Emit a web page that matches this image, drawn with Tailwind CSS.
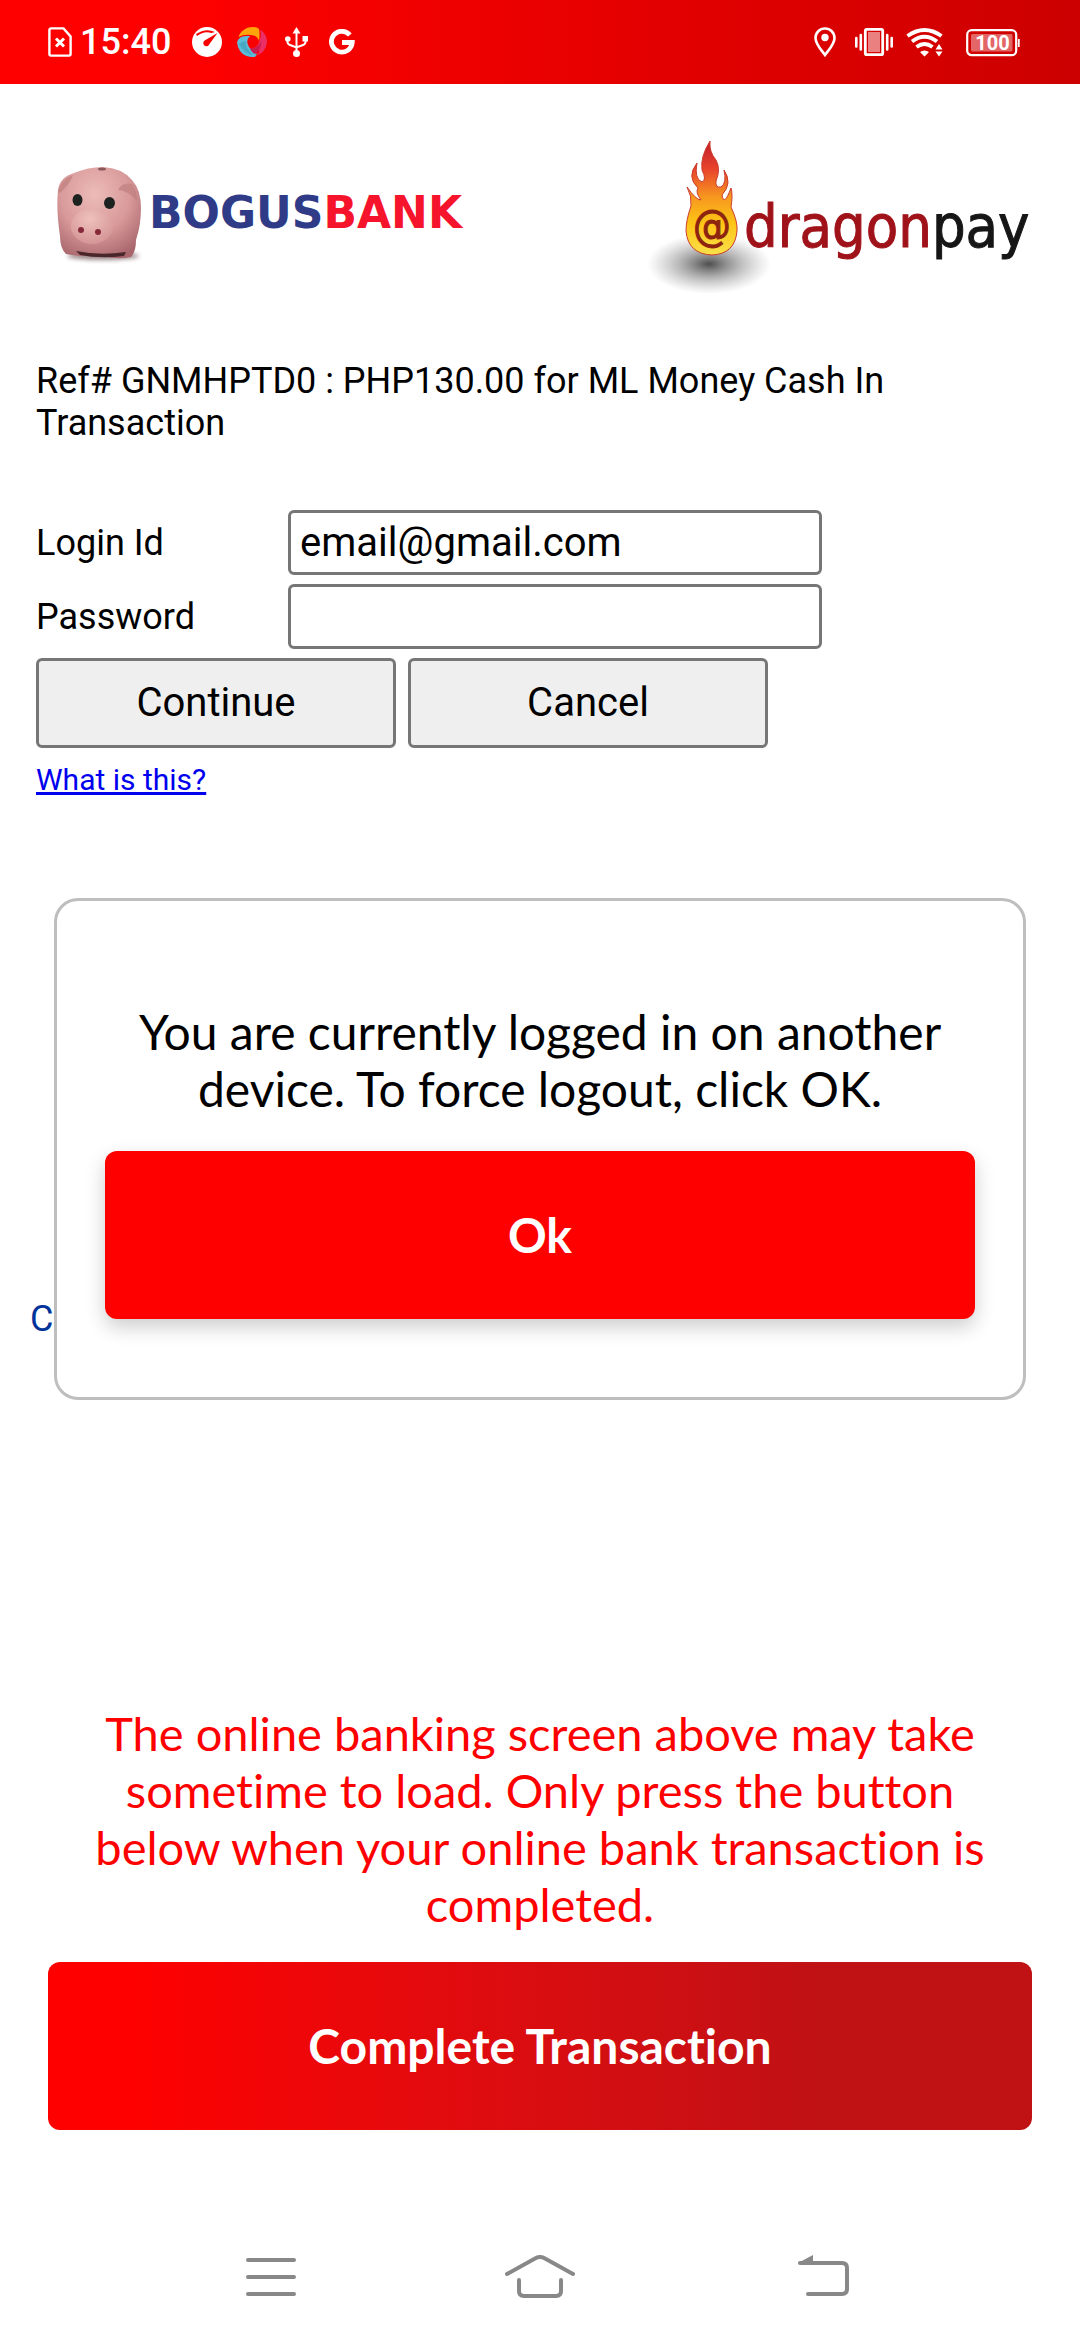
<!DOCTYPE html>
<html lang="en">
<head>
<meta charset="utf-8">
<meta name="viewport" content="width=device-width, initial-scale=1">
<title>Online banking</title>
<script src="https://cdn.jsdelivr.net/npm/@tailwindcss/browser@4"></script>
</head>
<body class="bg-white text-black font-['Roboto',sans-serif]">
<div class="relative flex min-h-screen flex-col">

  <!-- Status bar -->
  <header class="flex h-[84px] shrink-0 items-center justify-between bg-linear-to-r from-[#ff0000] from-15% to-[#cc0000] pl-12 pr-[60px] text-white">
    <div class="flex items-center">
      <svg class="h-[30px] w-6" viewBox="0 0 24 30" fill="none" stroke="#fff" stroke-width="2.4"><path d="M3 1.4H15.5L22.6 9.5V27a1.6 1.6 0 0 1-1.6 1.6H3A1.6 1.6 0 0 1 1.4 27V3A1.6 1.6 0 0 1 3 1.400Z"/><path d="M8 11.500L16 19.500M16 11.500L8 19.500" stroke-width="3"/></svg>
      <span class="ml-2 w-[100px] text-[36px] leading-[42px] font-medium">15:40</span>
      <svg class="ml-3 h-[30px] w-[30px]" viewBox="0 0 30 30"><circle cx="15" cy="15" r="15" fill="#fff"/><path d="M4 7Q14 .5 23 5L19.500 6Q12 3.500 5 9Z" fill="#f60000"/><path d="M25.500 6L17.500 17A3.200 3.200 0 1 1 13 13.200Z" fill="#f60000"/></svg>
      <svg class="ml-[15px] h-[30px] w-[30px]" viewBox="0 0 30 30"><path d="M1.500 10C4 3 10 0 16 0Q20 0 22 2Q23 7 22 14Q20 8 14 8Q7 7 1.500 10Z" fill="#fda50b"/><path d="M0 15Q2 9 9 9L13 9Q8 14 12 20Q15 25 20 27L18 30Q5 31 1 20Z" fill="#5bbdd8"/><path d="M23 2.500Q30 7 30 15Q29 26 18 29Q23 26 22 23Q17 26 13 21Q20 22 22 15Q25 9 23 2.500Z" fill="#ea2f67"/><path d="M2 17Q6 14 9 14Q8 21 16 28Q7 27 2 17Z" fill="#49a9c5"/><path d="M13 21Q21 22 24 14Q25 22 18 27Q14 25 13 21Z" fill="#ca1d50"/></svg>
      <svg class="ml-[18px] h-[30px] w-6" viewBox="0 0 24 30" fill="none" stroke="#fff" stroke-width="2"><path d="M11.500 4V26M2.500 12V15Q2.500 17 5 18L11.500 20.500L18 18Q20.500 17 20.500 15V12"/><path d="M11.500 0L15.500 6.500H7.500Z" fill="#fff" stroke="none"/><circle cx="2.800" cy="12" r="2.800" fill="#fff" stroke="none"/><path d="M17.500 9H23V14.500H17.500Z" fill="#fff" stroke="none"/><circle cx="11.500" cy="26.500" r="3.500" fill="#fff" stroke="none"/></svg>
      <svg class="ml-5 h-[26px] w-[26px]" viewBox="0 0 26 26" fill="none" stroke="#fff" stroke-width="4.800"><path d="M20.800 6A10.400 10.400 0 1 0 23.200 13.500H13"/></svg>
    </div>
    <div class="flex items-center">
      <svg class="h-[30px] w-[22px]" viewBox="0 0 22 30"><path d="M11 1.500A9.400 9.400 0 0 0 1.500 11C1.500 17.500 7.500 23 11 28C14.500 23 20.500 17.500 20.500 11A9.400 9.400 0 0 0 11 1.500Z" fill="none" stroke="#fff" stroke-width="2.600"/><circle cx="11" cy="10.500" r="3.700" fill="#fff"/></svg>
      <svg class="ml-[19px] h-[30px] w-[38px]" viewBox="0 0 38 30"><rect x="10.300" y="2.300" width="17.400" height="25.400" rx="1.500" fill="none" stroke="#fff" stroke-width="2.800"/><rect x="13" y="5" width="12" height="20" fill="#fff" fill-opacity=".5"/><path d="M1.300 11V19.500M5.800 8V22.500M32.200 8V22.500M36.700 11V19.500" stroke="#fff" stroke-width="2.600" stroke-linecap="round"/></svg>
      <svg class="ml-[13px] h-[30px] w-[38px]" viewBox="0 0 38 30"><g fill="none" stroke="#fff" stroke-width="3.800"><path d="M1.500 9Q18.500 -3 35.500 9"/><path d="M6 14.500Q18.500 5 31 14.500"/><path d="M10.500 20Q18.500 14 26.500 20"/></g><path d="M14 25Q18.500 22 23 25L18.500 29.500ZM29.500 22.500L33 17L36.500 22.500ZM29.500 24.500H36.500L33 29.500Z" fill="#fff"/></svg>
      <svg class="ml-[22px] h-[30px] w-[54px]" viewBox="0 0 54 30"><rect x="1.200" y="3.200" width="49" height="25" rx="4.500" fill="none" stroke="#fff" stroke-width="2.200"/><rect x="5" y="7" width="41.500" height="17.500" rx="1.500" fill="#fff" fill-opacity=".4"/><path d="M52.800 12V20" stroke="#fff" stroke-width="1.800"/><text x="26.500" y="22.500" text-anchor="middle" font-family="Roboto, sans-serif" font-size="20" font-weight="700" fill="#fff">100</text></svg>
    </div>
  </header>

  <main class="flex flex-1 flex-col">
    <!-- Bank and payment logos -->
    <div class="flex justify-between pt-[46px] pr-5 pl-9">
      <svg class="h-[170px] w-[440px]" viewBox="36 130 440 170" role="img" aria-label="Bogus Bank">
        <defs>
          <radialGradient id="pig" cx=".45" cy=".3" r=".75"><stop offset="0" stop-color="#ecbcb8"/><stop offset=".55" stop-color="#d99a9b"/><stop offset="1" stop-color="#a8666c"/></radialGradient>
          <radialGradient id="snout" cx=".45" cy=".3" r=".75"><stop offset="0" stop-color="#efc1bc"/><stop offset="1" stop-color="#d39294"/></radialGradient>
          <filter id="soft" x="-20%" y="-80%" width="140%" height="260%"><feGaussianBlur stdDeviation="2"/></filter>
        </defs>
        <ellipse cx="103" cy="256" rx="36" ry="4" fill="#5c3b3e" opacity=".6" filter="url(#soft)"/>
        <path d="M58 190Q60 177 74 173Q88 167 103 167Q122 168 132 180Q141 190 141 208Q141 225 136 240Q136 252 131 257Q118 260 103 256Q80 257 66 254Q60 248 60 236Q56 210 58 190Z" fill="url(#pig)"/>
        <path d="M58 192Q61 179 73 175Q70 184 60 193ZM118 190Q122 182 132 184Q138 194 137 201Q127 190 118 190Z" fill="#bd7e7c" opacity=".65"/>
        <ellipse cx="102" cy="169" rx="4" ry="1.500" fill="#8b575a"/>
        <path d="M76 251Q100 256 126 252L124 256Q100 259 80 255Z" fill="#48262a"/>
        <ellipse cx="92" cy="226" rx="21" ry="18" fill="url(#snout)"/>
        <ellipse cx="77.500" cy="200" rx="5" ry="6" fill="#1c2220"/><ellipse cx="109.500" cy="203" rx="5.500" ry="6" fill="#1c2220"/>
        <circle cx="81" cy="230" r="3" fill="#85293a"/><circle cx="98" cy="232" r="3" fill="#85293a"/>
        <text x="149" y="228" font-family="'DejaVu Sans', sans-serif" font-weight="700" font-size="44" fill="#2f3b87">BOGUS<tspan fill="#f5142b">BANK</tspan></text>
      </svg>
      <svg class="h-[170px] w-[420px]" viewBox="640 130 420 170" role="img" aria-label="Dragonpay">
        <defs>
          <linearGradient id="flame" x1="0" y1="0" x2="0" y2="1"><stop offset="0" stop-color="#c01c2c"/><stop offset=".25" stop-color="#e9452b"/><stop offset=".5" stop-color="#f79a1f"/><stop offset=".72" stop-color="#fdc414"/><stop offset="1" stop-color="#fbe04a"/></linearGradient>
          <radialGradient id="shade"><stop offset="0" stop-color="#444" stop-opacity=".95"/><stop offset=".5" stop-color="#777" stop-opacity=".5"/><stop offset="1" stop-color="#999" stop-opacity="0"/></radialGradient>
        </defs>
        <ellipse cx="709" cy="264" rx="62" ry="30" fill="url(#shade)"/>
        <path d="M710 141Q709 152 716 160Q721 169 716 181Q715 188 721 187Q727 183 724 170Q733 183 722 195Q724 207 731 188Q733 195 731 207Q738 222 737 231Q735 254 712 255Q688 254 686 231Q686 220 691 206Q692 196 687 187Q696 200 701 200Q695 192 698 188Q686 177 697 163Q694 179 702 182Q707 180 702 170Q700 157 710 141Z" fill="url(#flame)" stroke="#cb3c2c" stroke-width="1"/>
        <text x="712" y="241" text-anchor="middle" font-family="'DejaVu Sans Condensed', 'DejaVu Sans', sans-serif" font-stretch="condensed" font-size="42" stroke="#8d240f" stroke-width="1" fill="#8d240f">@</text>
        <text x="744" y="247" font-family="'DejaVu Sans Condensed', 'DejaVu Sans', sans-serif" font-stretch="condensed" font-size="59" fill="#a01219" stroke="#a01219" stroke-width="1">dragon<tspan fill="#161616" stroke="#161616">pay</tspan></text>
      </svg>
    </div>

    <p class="mt-[60px] px-9 text-[36px] leading-[42px]">Ref# GNMHPTD0 : PHP130.00 for ML Money Cash In Transaction</p>

    <form class="mt-[66px] flex flex-col gap-[9px] px-9">
      <div class="grid grid-cols-[252px_minmax(0,534px)] items-center gap-y-[9px] text-[36px] leading-[42px]">
        <label for="login">Login Id</label>
        <input id="login" type="text" value="email@gmail.com" class="h-[65px] w-full rounded-[6px] border-3 border-[#767676] bg-white px-[9px] text-[40px]">
        <label for="password">Password</label>
        <input id="password" type="password" class="h-[65px] w-full rounded-[6px] border-3 border-[#767676] bg-white px-[9px] text-[40px]">
      </div>
      <div class="flex gap-3">
        <button type="button" class="h-[90px] w-[360px] rounded-[6px] border-3 border-[#767676] bg-[#efefef] text-[40px]">Continue</button>
        <button type="button" class="h-[90px] w-[360px] rounded-[6px] border-3 border-[#767676] bg-[#efefef] text-[40px]">Cancel</button>
      </div>
    </form>
    <a href="#" class="mt-[14px] ml-9 self-start text-[30px] leading-9 text-[#0000ee] underline">What is this?</a>
    <p class="mt-[500px] px-[30px] text-[36px] leading-[42px] text-[#003399]">C</p>

    <section class="mt-auto px-12 pb-[92px] pt-8 text-center font-['Lato',sans-serif] [font-variant-ligatures:none]">
      <p class="px-9 text-[47px] leading-[57px] text-[#ff0000]">The online banking screen above may take sometime to load. Only press the button below when your online bank transaction is completed.</p>
      <button type="button" class="mt-[29px] h-[168px] w-full rounded-[12px] bg-linear-to-r from-[#ff0000] from-8% to-[#c01115] to-78% text-[48px] font-bold text-white [font-variant-ligatures:none]">Complete Transaction</button>
    </section>
  </main>

  <!-- Logged-in elsewhere dialog -->
  <div role="dialog" aria-labelledby="notice" class="absolute inset-x-[54px] top-[898px] rounded-[24px] border-3 border-[#bebebe] bg-white px-12 pt-[102px] pb-[78px] text-center font-['Lato',sans-serif] text-[48px]">
    <p id="notice" class="px-6 leading-[57px]">You are currently logged in on another device. To force logout, click OK.</p>
    <button type="button" class="mt-[34px] h-[168px] w-full rounded-[12px] bg-[#ff0000] font-bold text-white shadow-[0_8px_20px_rgba(0,0,0,0.2)]">Ok</button>
  </div>

  <!-- System navigation -->
  <nav class="grid h-[118px] shrink-0 grid-cols-[1fr_auto_1fr] items-center px-[246px] pb-2 text-[#888]">
    <button type="button" aria-label="Recent apps" class="justify-self-start"><svg class="h-[44px] w-[50px]" viewBox="0 0 50 44" fill="none" stroke="currentColor" stroke-width="4" stroke-linecap="round"><path d="M2 5H48M2 22H48M2 39H48"/></svg></button>
    <button type="button" aria-label="Home"><svg class="h-[44px] w-[70px]" viewBox="0 0 70 44" fill="none" stroke="currentColor" stroke-width="4" stroke-linecap="round"><path d="M2 19L30 3.500Q35 .5 40 3.500L68 19M14 25V36Q14 41 19 41H51Q56 41 56 36V25"/></svg></button>
    <button type="button" aria-label="Back" class="-mr-4 justify-self-end"><svg class="h-[44px] w-[52px]" viewBox="0 0 52 44" fill="none" stroke="currentColor" stroke-width="4" stroke-linecap="round"><path d="M2 8H44Q49 8 49 13V34Q49 39 44 39H10"/><path d="M0 8L15 0V9H2Z" fill="currentColor" stroke="none"/></svg></button>
  </nav>
</div>
</body>
</html>
